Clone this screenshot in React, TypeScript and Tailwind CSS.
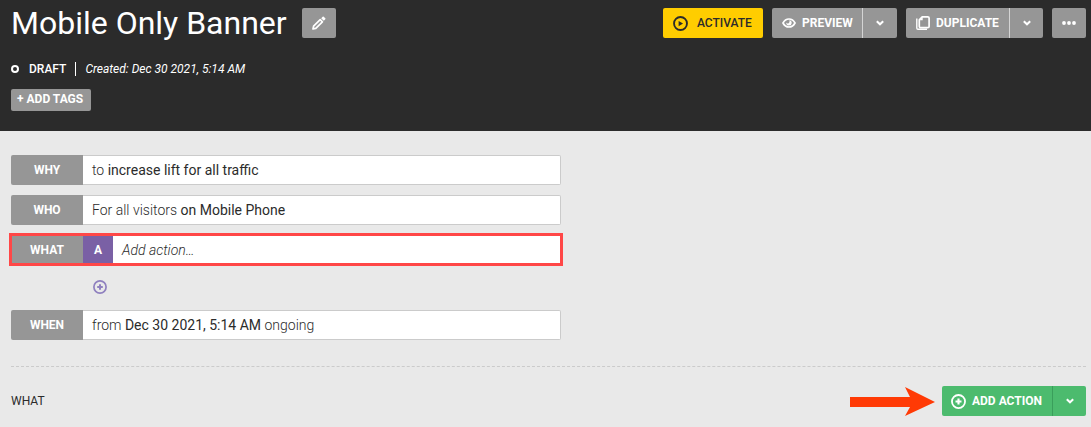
import React from 'react';

type IconProps = { className?: string };

function PencilIcon({ className }: IconProps) {
  return (
    <svg viewBox="0 0 14 14" fill="none" stroke="currentColor" className={className} aria-hidden="true">
      <path d="M1 13l.6-2.800 6.600-6.600 2.200 2.200-6.600 6.600z" strokeWidth="1.700" strokeLinejoin="round" />
      <path d="M9.200 2.200l1.500-1.500c.3-.3.700-.3 1 0l1.600 1.600c.3.3.3.700 0 1l-1.500 1.500z" fill="currentColor" stroke="none" />
    </svg>
  );
}

function PlayCircleIcon({ className }: IconProps) {
  return (
    <svg viewBox="0 0 16 16" fill="none" className={className} aria-hidden="true">
      <circle cx="8" cy="8" r="6.900" stroke="currentColor" strokeWidth="2" />
      <path d="M6 5.200l4.700 2.800L6 10.800z" fill="currentColor" />
    </svg>
  );
}

function PlusCircleIcon({ className }: IconProps) {
  return (
    <svg viewBox="0 0 14 14" fill="none" stroke="currentColor" className={className} aria-hidden="true">
      <circle cx="7" cy="7" r="6.100" strokeWidth="1.700" />
      <path d="M7 4.200v5.600M4.200 7h5.600" strokeWidth="2" />
    </svg>
  );
}

function EyeIcon({ className }: IconProps) {
  return (
    <svg viewBox="0 0 14 10" fill="none" className={className} aria-hidden="true">
      <path d="M1 5C2.300 2.500 4.500 1 7 1s4.700 1.500 6 4c-1.300 2.500-3.500 4-6 4S2.300 7.500 1 5z" stroke="currentColor" strokeWidth="1.700" />
      <path d="M7.300 2.200a2.700 2.700 0 1 1-3 2.400c.5.900 1.500 1.200 2.300.7.900-.5 1.200-1.800.7-3.100z" fill="currentColor" />
    </svg>
  );
}

function CopyIcon({ className }: IconProps) {
  return (
    <svg viewBox="0 0 14 14" fill="none" stroke="currentColor" className={className} aria-hidden="true">
      <path d="M6.200.9h5.500c.8 0 1.400.5 1.400 1.200v8.400c0 .7-.6 1.200-1.400 1.200H4.700c-.8 0-1.400-.5-1.400-1.200V3.800z" strokeWidth="1.700" strokeLinejoin="round" />
      <path d="M3.500 4.200H6.700V1z" fill="currentColor" stroke="none" />
      <path d="M.8 2.500v9.600c0 .7.500 1.200 1.200 1.200h9" strokeWidth="1.400" />
    </svg>
  );
}

function ChevronIcon({ className }: IconProps) {
  return (
    <svg viewBox="0 0 8 6" fill="none" stroke="currentColor" strokeWidth="2" className={className} aria-hidden="true">
      <path d="M.8 1.200L4 4.300l3.200-3.100" />
    </svg>
  );
}

function DotsIcon({ className }: IconProps) {
  return (
    <svg viewBox="0 0 14 4" fill="currentColor" className={className} aria-hidden="true">
      <circle cx="2" cy="2" r="1.900" />
      <circle cx="7" cy="2" r="1.900" />
      <circle cx="12" cy="2" r="1.900" />
    </svg>
  );
}

function ArrowIcon({ className }: IconProps) {
  return (
    <svg viewBox="0 0 85 30" fill="#ff3a05" className={className} aria-hidden="true">
      <path d="M0 11h60L55 1l30 15-30 14 5-9H0z" />
    </svg>
  );
}

function Row({ label, children }: { label: string; children: React.ReactNode }) {
  return (
    <div className="flex h-[30px]">
      <div className="flex w-[72px] shrink-0 items-center justify-center rounded-l-xs bg-[#969696] text-xs font-bold text-white">
        {label}
      </div>
      <div className="flex grow items-center rounded-r-xs border border-l-0 border-[#cbcbcb] bg-white px-[9px] text-sm font-light">
        <p>{children}</p>
      </div>
    </div>
  );
}

export default function App() {
  return (
    <div className="min-h-screen bg-[#e9e9e9] font-['Roboto',sans-serif] text-[#2b2b2b]">
      {/* Header */}
      <header className="bg-[#2b2b2b] pt-2 pr-[5px] pb-5 pl-[11px] text-white">
        <div className="flex h-[30px] items-center justify-between">
          <div className="flex items-center gap-[15px]">
            <h1 className="text-[32px] leading-[30px]">Mobile Only Banner</h1>
            <button aria-label="Edit name" className="flex h-[30px] w-[34px] items-center justify-center rounded-xs bg-[#969696]">
              <PencilIcon className="size-[14px]" />
            </button>
          </div>

          <div className="flex gap-[9px] text-xs font-bold">
            <button className="flex h-[30px] w-[100px] items-center gap-[9px] rounded-xs bg-[#ffcd00] pl-[10px] font-medium text-[#2b2b2b]">
              <PlayCircleIcon className="size-[15px]" />
              ACTIVATE
            </button>
            <div className="flex h-[30px]">
              <button className="flex w-[90px] items-center gap-[6px] rounded-l-xs bg-[#969696] pl-[10px]">
                <EyeIcon className="h-[10px] w-[14px]" />
                PREVIEW
              </button>
              <button aria-label="Preview options" className="flex w-[35px] items-center justify-center rounded-r-xs border-l border-[#d4d4d4] bg-[#969696]">
                <ChevronIcon className="h-[6px] w-2" />
              </button>
            </div>
            <div className="flex h-[30px]">
              <button className="flex w-[103px] items-center gap-[6px] rounded-l-xs bg-[#969696] pl-[10px]">
                <CopyIcon className="size-[14px]" />
                DUPLICATE
              </button>
              <button aria-label="Duplicate options" className="flex w-[34px] items-center justify-center rounded-r-xs border-l border-[#d4d4d4] bg-[#969696]">
                <ChevronIcon className="h-[6px] w-2" />
              </button>
            </div>
            <button aria-label="More" className="flex h-[30px] w-[34px] items-center justify-center rounded-xs bg-[#969696]">
              <DotsIcon className="h-1 w-[14px]" />
            </button>
          </div>
        </div>

        <div className="mt-6 flex h-[14px] items-center text-xs">
          <span className="size-2 rounded-full border-2 border-white" />
          <span className="ml-[10px] font-medium">DRAFT</span>
          <span className="mx-[9px] h-[14px] w-px bg-white" />
          <em>Created: Dec 30 2021, 5:14 AM</em>
        </div>

        <button className="mt-[13px] flex h-[22px] w-20 items-center rounded-xs bg-[#969696] pb-[2px] pl-[6px] text-xs font-bold">
          + ADD TAGS
        </button>
      </header>

      <main className="pt-6 pr-[5px] pb-[11px] pl-[11px]">
        {/* Experience summary */}
        <section className="max-w-[550px]">
          <div className="flex flex-col gap-[10px]">
            <Row label="WHY">
              to <b className="font-normal">increase lift for all traffic</b>
            </Row>
            <Row label="WHO">
              For all visitors <b className="font-normal">on Mobile Phone</b>
            </Row>
            <div className="flex h-[29px] bg-white outline-3 -outline-offset-1 outline-[#ff4747]">
              <div className="flex w-[72px] items-center justify-center bg-[#969696] text-xs font-bold text-white">WHAT</div>
              <div className="flex w-[30px] items-center justify-center bg-[#7a60a5] text-xs font-bold text-white">A</div>
              <em className="flex items-center px-[9px] text-sm font-light">Add action…</em>
            </div>
          </div>
          <button aria-label="Add variation" className="mt-4 mb-4 ml-[82px] block text-[#8f80bf]">
            <PlusCircleIcon className="size-[14px]" />
          </button>
          <Row label="WHEN">
            from <b className="font-normal">Dec 30 2021, 5:14 AM</b> ongoing
          </Row>
        </section>

        <hr className="mt-[26px] border-dashed border-[#cbcbcb]" />

        {/* Actions */}
        <section className="mt-[19px] flex items-center justify-between">
          <h2 className="text-xs">WHAT</h2>
          <div className="flex items-center gap-[7px]">
            <ArrowIcon className="h-[30px] w-[85px]" />
            <div className="flex h-[30px] text-xs font-bold text-white">
              <button className="flex w-[110px] items-center gap-[6px] rounded-l-xs bg-[#4cbb6e] pl-[9px]">
                <PlusCircleIcon className="size-[15px]" />
                ADD ACTION
              </button>
              <button aria-label="Action options" className="flex w-[34px] items-center justify-center rounded-r-xs border-l border-[#3a9e5b] bg-[#4cbb6e]">
                <ChevronIcon className="h-[6px] w-2" />
              </button>
            </div>
          </div>
        </section>
      </main>
    </div>
  );
}
